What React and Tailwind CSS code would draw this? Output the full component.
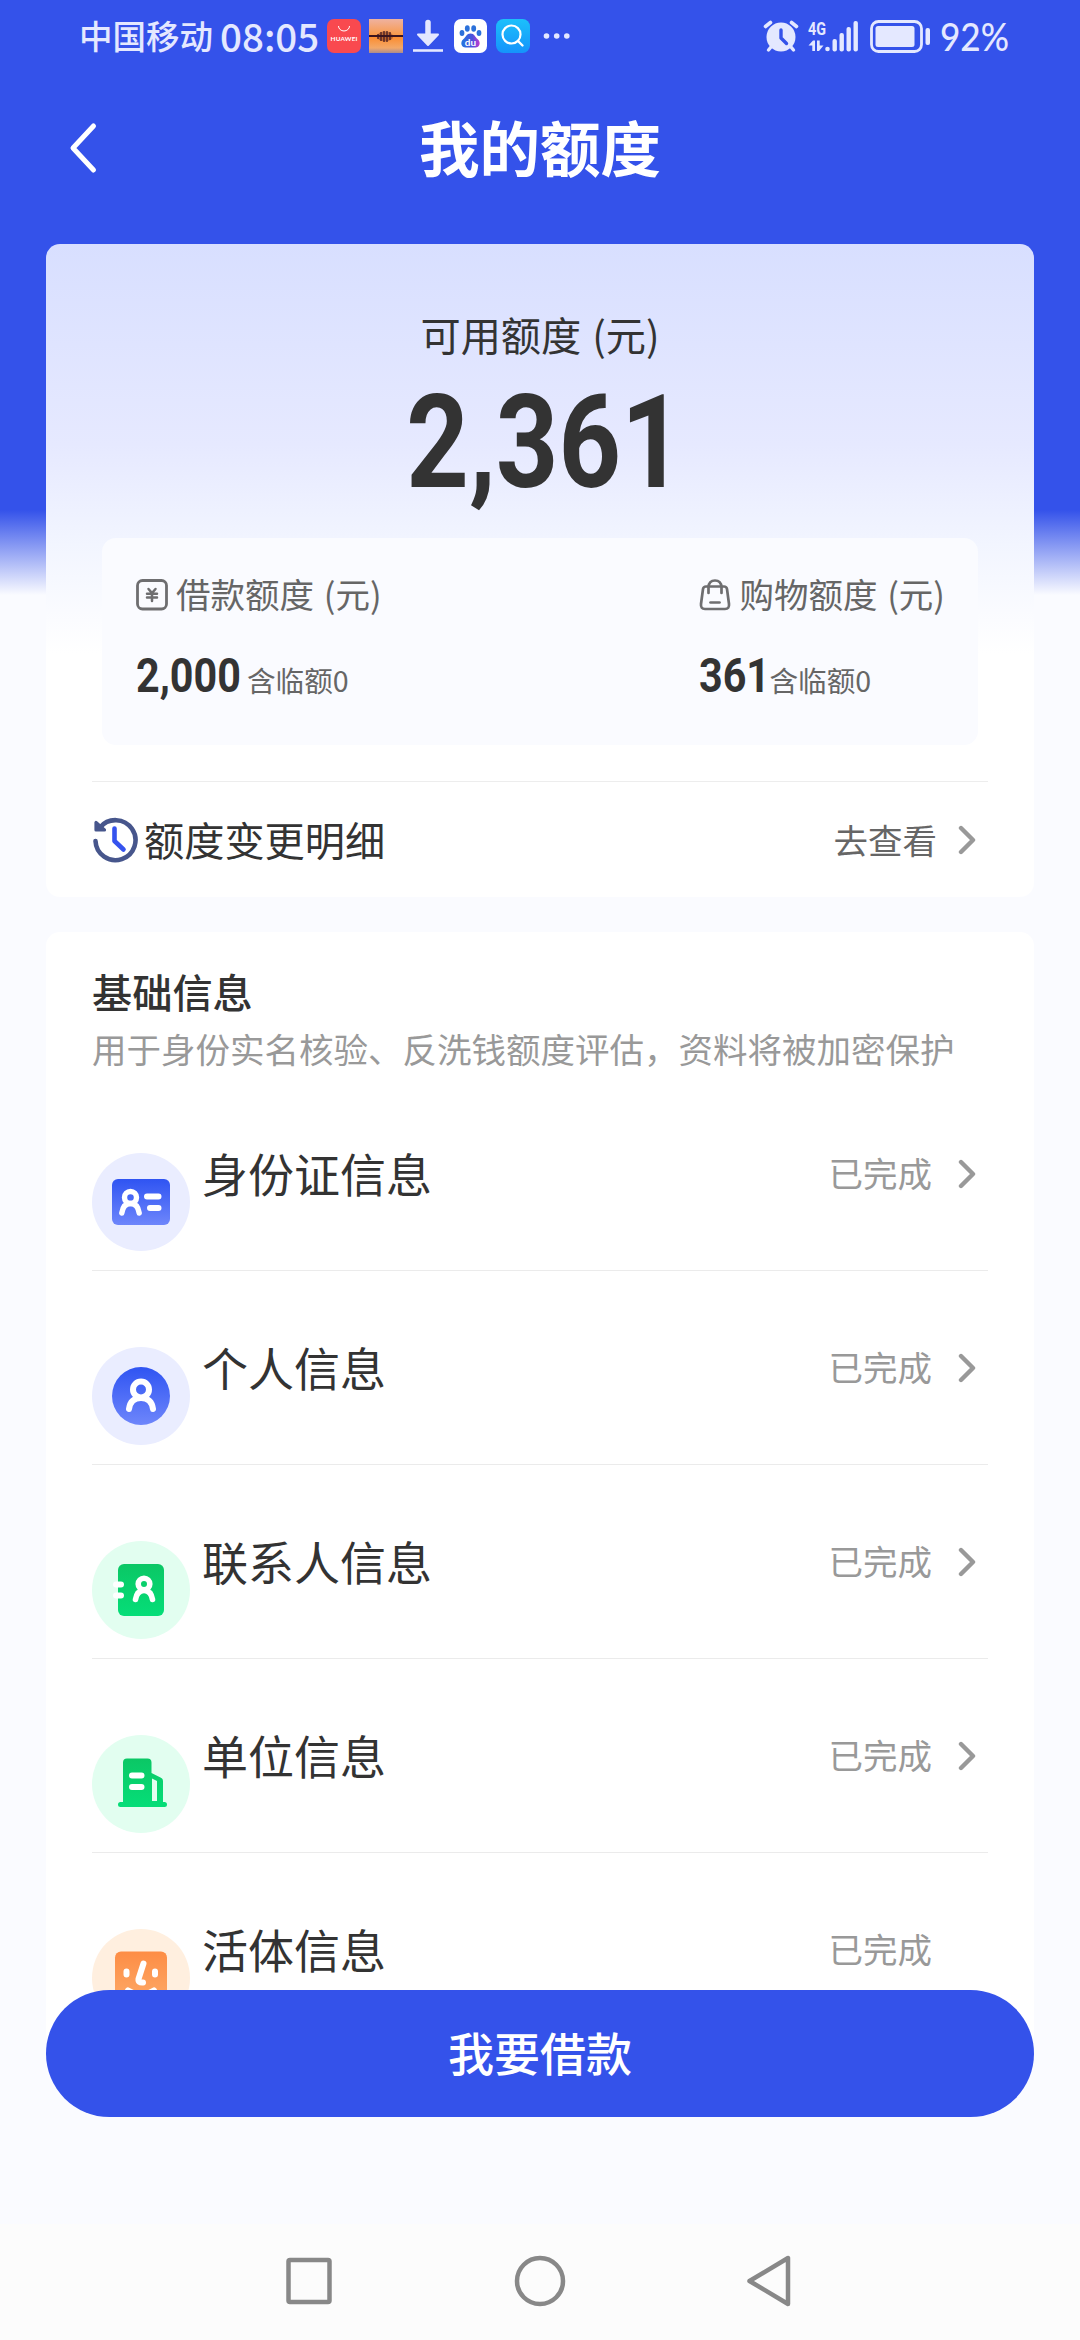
const FONT = "font-['Noto_Sans_CJK_SC',sans-serif]";

const Chevron = ({ className = '' }) => (
    <svg className={`h-[30px] w-[20px] ${className}`} viewBox="0 0 20 30" fill="none">
        <path d="M4 3 L16 15 L4 27" stroke="#999" strokeWidth="4.4" strokeLinecap="round" strokeLinejoin="round" />
    </svg>
);

const StatusBar = () => (
    <div className="flex h-[72px] shrink-0 items-center pl-[79px] pr-[72px] text-[#e4e8ff]">
        <span className="w-[141px] whitespace-nowrap text-[33.5px] font-medium leading-[70px] -mt-[2px]">中国移动</span>
        <span className="w-[107px] whitespace-nowrap text-[38.5px] font-medium leading-[70px] -mt-[2px]">08:05</span>

        {/* Notification icons */}
        <svg className="h-[34px] w-[34px]" viewBox="0 0 34 34">
            <rect width="34" height="34" rx="7" fill="#f9494f" />
            <path d="M11.5 7 a5.5 5 0 0 0 11 0" fill="none" stroke="#fff" strokeWidth="1" />
            <text x="17" y="22" fill="#fff" fontSize="6.4" fontWeight="700" textAnchor="middle" fontFamily="Lato, sans-serif" textLength="27">HUAWEI</text>
        </svg>
        <svg className="ml-[8px] h-[34px] w-[34px]" viewBox="0 0 34 34">
            <defs>
                <linearGradient id="sky" x1="0" y1="0" x2="0" y2="1">
                    <stop offset="0" stopColor="#efb2a0" />
                    <stop offset="0.46" stopColor="#f89a4c" />
                    <stop offset="0.55" stopColor="#fb8e33" />
                    <stop offset="0.85" stopColor="#f3a868" />
                    <stop offset="1" stopColor="#a98c90" />
                </linearGradient>
            </defs>
            <rect width="34" height="34" fill="url(#sky)" />
            <ellipse cx="16" cy="17.5" rx="8" ry="5" fill="#8d3f22" opacity="0.55" />
            <path d="M0 17 H34" stroke="#3a1420" strokeWidth="1.8" />
            <path d="M9 15 V20 M12 13 V22 M15 12 V23 M18 12 V23 M21 13 V21" stroke="#3a1420" strokeWidth="1.2" />
        </svg>
        <svg className="ml-[9px] h-[34px] w-[32px]" viewBox="0 0 32 34">
            <path d="M16 3.5 V15" stroke="currentColor" strokeWidth="5.5" strokeLinecap="round" />
            <path d="M6 15.5 H26 L16 26 Z" fill="currentColor" stroke="currentColor" strokeWidth="2" strokeLinejoin="round" />
            <path d="M1 31.5 H31" stroke="currentColor" strokeWidth="2.6" />
        </svg>
        <svg className="ml-[10px] h-[34px] w-[33px]" viewBox="0 0 33 34">
            <defs>
                <linearGradient id="paw" x1="0" y1="0" x2="1" y2="0">
                    <stop offset="0" stopColor="#2277e0" />
                    <stop offset="0.6" stopColor="#4a50dd" />
                    <stop offset="1" stopColor="#c33bd0" />
                </linearGradient>
            </defs>
            <rect width="33" height="34" rx="7" fill="#fff" />
            <ellipse cx="8" cy="14" rx="2.4" ry="3" fill="#2c71da" />
            <ellipse cx="13.3" cy="9.5" rx="2.4" ry="3.2" fill="#2c71da" />
            <ellipse cx="19.7" cy="9.5" rx="2.4" ry="3.2" fill="#2c71da" />
            <ellipse cx="25" cy="14" rx="2.4" ry="3" fill="#2c71da" />
            <path d="M16.5 14.5 c4 0 4.5 3.5 7 5.5 c4 3.5 2 8.5 -2 8.5 H11.5 c-4 0 -6 -5 -2 -8.5 c2.5 -2 3 -5.5 7 -5.500 Z" fill="url(#paw)" />
            <text x="16.5" y="27" fill="#fff" fontSize="10" fontWeight="700" textAnchor="middle" fontFamily="Lato, sans-serif">du</text>
        </svg>
        <svg className="ml-[9px] h-[34px] w-[34px]" viewBox="0 0 34 34">
            <defs>
                <linearGradient id="find" x1="0" y1="0" x2="0" y2="1">
                    <stop offset="0" stopColor="#1cc0fb" />
                    <stop offset="1" stopColor="#1593fb" />
                </linearGradient>
            </defs>
            <rect width="34" height="34" rx="7.5" fill="url(#find)" />
            <circle cx="15.5" cy="15.5" r="9" fill="none" stroke="#fff" strokeWidth="2.2" />
            <path d="M22 22 L26.5 26.5" stroke="#fff" strokeWidth="2.4" strokeLinecap="round" />
        </svg>
        <svg className="ml-[13px] h-[8px] w-[28px]" viewBox="0 0 28 8" fill="currentColor">
            <circle cx="3.5" cy="4" r="2.8" />
            <circle cx="13.7" cy="4" r="2.8" />
            <circle cx="23.8" cy="4" r="2.8" />
        </svg>

        {/* System icons */}
        <div className="ml-auto flex items-center">
            <svg className="h-[34px] w-[36px]" viewBox="0 0 36 34">
                <circle cx="18" cy="18" r="14.5" fill="currentColor" />
                <path d="M2.5 7.5 L7.5 3.5 M33.5 7.5 L28.5 3.5" stroke="currentColor" strokeWidth="3.6" strokeLinecap="round" />
                <path d="M8 28 L5.5 31 M28 28 L30.5 31" stroke="currentColor" strokeWidth="3.4" strokeLinecap="round" />
                <path d="M18 11 V19 L23.5 24.5" fill="none" stroke="#3452ea" strokeWidth="3.4" strokeLinecap="round" strokeLinejoin="round" />
            </svg>
            <svg className="ml-[9px] h-[34px] w-[52px]" viewBox="0 0 52 34" fill="currentColor">
                <text x="0" y="15.5" fontSize="18.5" fontWeight="700" fontFamily="Roboto, sans-serif" textLength="18" lengthAdjust="spacingAndGlyphs">4G</text>
                <path d="M0.5 26.5 L5 21.5 H7 V32 H4.300 V26.5 Z" />
                <path d="M9 21.5 H11.7 V26.5 H15.5 L11 32 H9 Z" />
                <circle cx="19.5" cy="30" r="2.3" />
                <rect x="24.5" y="20" width="4.4" height="12.5" rx="2" />
                <rect x="31.5" y="14" width="4.4" height="18.5" rx="2" />
                <rect x="38.5" y="8" width="4.4" height="24.5" rx="2" />
                <rect x="45.5" y="2" width="4.4" height="30.500" rx="2" />
            </svg>
            <svg className="ml-[10px] h-[34px] w-[62px]" viewBox="0 0 62 34">
                <rect x="1.5" y="2.5" width="50" height="30" rx="7" fill="none" stroke="currentColor" strokeWidth="2.8" />
                <rect x="5.5" y="7" width="39" height="21" rx="2.5" fill="currentColor" />
                <rect x="55.5" y="9" width="4.5" height="17" rx="2" fill="currentColor" />
            </svg>
            <span className="ml-[8px] w-[68px] origin-left scale-x-[0.9] whitespace-nowrap font-[Lato] text-[39px] font-medium leading-[72px]">92%</span>
        </div>
    </div>
);

const Circle = ({ fill, children }) => (
    <svg className="h-[98px] w-[98px] shrink-0" viewBox="0 0 98 98">
        <defs>
            <linearGradient id="blue" x1="0" y1="0" x2="0" y2="1">
                <stop offset="0" stopColor="#2f54f2" />
                <stop offset="1" stopColor="#6e86fb" />
            </linearGradient>
            <linearGradient id="green" x1="0" y1="0" x2="0" y2="1">
                <stop offset="0" stopColor="#0bc765" />
                <stop offset="1" stopColor="#05de78" />
            </linearGradient>
            <linearGradient id="orange" x1="0" y1="0" x2="0" y2="1">
                <stop offset="0" stopColor="#fd8d45" />
                <stop offset="1" stopColor="#fdab6a" />
            </linearGradient>
        </defs>
        <circle cx="49" cy="49" r="49" fill={fill} />
        {children}
    </svg>
);

const IdCardIcon = () => (
    <Circle fill="#eaedff">
        <rect x="20" y="26" width="58" height="46" rx="6" fill="url(#blue)" />
        <g fill="none" stroke="#fff" strokeLinecap="round">
            <circle cx="38.5" cy="44.5" r="6" strokeWidth="5.4" />
            <path d="M29.8 60 c1 -6.500 4 -9.500 8.700 -9.500 s7.700 3 8.700 9.500" strokeWidth="5.4" />
            <path d="M55 43.5 H66.5 M58 55 H66.5" strokeWidth="6" />
        </g>
    </Circle>
);

const PersonIcon = () => (
    <Circle fill="#eaedff">
        <circle cx="49" cy="49" r="29" fill="url(#blue)" />
        <g fill="none" stroke="#fff" strokeLinecap="round">
            <circle cx="49" cy="42.5" r="8" strokeWidth="6" />
            <path d="M37 62 c1 -7.500 5 -11 12 -11 s11 3.500 12 11" strokeWidth="6" />
        </g>
    </Circle>
);

const ContactIcon = () => (
    <Circle fill="#e2fef0">
        <rect x="26" y="23" width="46" height="52" rx="6" fill="url(#green)" />
        <g fill="none" stroke="#fff" strokeLinecap="round">
            <path d="M24 43.5 H29 M24 54.5 H29" strokeWidth="6" />
            <circle cx="52" cy="43" r="5.800" strokeWidth="5.600" />
            <path d="M43.5 58.5 c1 -6 3.500 -9 8.500 -9 s7.500 3 8.500 9" strokeWidth="5.600" />
        </g>
    </Circle>
);

const CompanyIcon = () => (
    <Circle fill="#e2fef0">
        <path d="M31 67 V27.5 a4 4 0 0 1 4 -4 H55.5 a4 4 0 0 1 4 4 V38 L68.5 42.5 a4 4 0 0 1 2.5 4 V67 H72.5 a2.5 2.5 0 0 1 0 5 H28.5 a2.5 2.5 0 0 1 0 -5 Z" fill="url(#green)" />
        <path d="M40 40.5 H49.5 M40 52 H49.5" stroke="#fff" strokeWidth="6" strokeLinecap="round" />
        <path d="M60 43.500 L65 46 V66 H60 Z" fill="#e2fef0" />
    </Circle>
);

const FaceIcon = () => (
    <Circle fill="#ffefdf">
        <rect x="23" y="22.5" width="52" height="54" rx="6" fill="url(#orange)" />
        <g fill="none" stroke="#fff" strokeLinecap="round" strokeLinejoin="round">
            <path d="M34.5 42.5 V45.5 M63 42.5 V45.5" strokeWidth="6" />
            <path d="M51.5 34.5 L46.5 50 Q46 54 51 53.5" strokeWidth="6" />
            <path d="M36 61.500 Q49 70 62 61.500" strokeWidth="6" />
        </g>
    </Circle>
);

const rows = [
    { title: '身份证信息', icon: <IdCardIcon />, arrow: true },
    { title: '个人信息', icon: <PersonIcon />, arrow: true },
    { title: '联系人信息', icon: <ContactIcon />, arrow: true },
    { title: '单位信息', icon: <CompanyIcon />, arrow: true },
    { title: '活体信息', icon: <FaceIcon />, arrow: false },
];

const YenIcon = () => (
    <svg className="h-[32px] w-[32px]" viewBox="0 0 32 32" fill="none" stroke="#6e6e70" strokeLinecap="round">
        <rect x="1.5" y="1.5" width="29" height="28.5" rx="5" strokeWidth="2.8" />
        <path d="M12.5 10 L16 14 L19.5 10 M16 14 V22 M11 14.800 H21 M11 18.500 H21" strokeWidth="2.5" />
    </svg>
);

const BagIcon = () => (
    <svg className="h-[32px] w-[32px]" viewBox="0 0 32 32" fill="none" stroke="#6e6e70" strokeWidth="2.7" strokeLinecap="round">
        <path d="M7 7.5 H25 Q27.5 7.5 28 10 L30 25 Q30.5 30 26 30 H6 Q1.5 30 2 25 L4 10 Q4.5 7.5 7 7.5 Z" />
        <path d="M9.5 14 V8 Q10 1.5 16 1.5 Q22 1.5 22.5 8 V14" />
        <path d="M11.5 23.5 H20.5" />
    </svg>
);

const QuotaItem = ({ icon, label, amount, amountClass }) => (
    <div>
        <div className="flex h-[50px] items-center gap-[8px]">
            {icon}
            <span className="-mt-[4px] whitespace-nowrap text-[34.5px] leading-[46px] text-[#666] [word-spacing:2px]">{label}</span>
        </div>
        <div className="mt-[26px] flex h-[60px] items-baseline">
            <span className={`origin-left scale-x-[0.86] font-[Roboto] text-[48px] font-bold leading-[60px] text-[#333] ${amountClass}`}>{amount}</span>
            <span className="whitespace-nowrap text-[28.6px] leading-[60px] text-[#666]">含临额0</span>
        </div>
    </div>
);

export default function App() {
    return (
        <div className={`relative flex h-[2340px] w-[1080px] flex-col overflow-hidden bg-[#fafbff] bg-[linear-gradient(to_bottom,#3452ea_0px,#3452ea_510px,#fafbff_595px)] ${FONT}`}>
            <StatusBar />

            {/* Title bar */}
            <header className="grid h-[172px] shrink-0 grid-cols-[1fr_auto_1fr] items-start pt-[30px]">
                <svg className="ml-[65px] mt-[20px] h-[52px] w-[36px]" viewBox="0 0 36 52" fill="none">
                    <path d="M28.5 4 L8 26 L28.5 48" stroke="#fff" strokeWidth="5" strokeLinecap="round" strokeLinejoin="round" />
                </svg>
                <h1 className="text-[60.5px] font-bold leading-[88px] text-white">我的额度</h1>
            </header>

            <main className="min-h-0 flex-1 overflow-hidden px-[46px]">
                {/* Quota card */}
                <section className="h-[653px] rounded-[14px] bg-[linear-gradient(to_bottom,#d8dfff_0px,#e6e9ff_200px,#f2f5ff_300px,#ffffff_410px)] pt-[60px]">
                    <p className="text-center text-[40.2px] leading-[60px] text-[#333] [word-spacing:2px]">可用额度 (元)</p>
                    <p className="mt-[11px] h-[136px] origin-center scale-x-[0.84] pl-[12px] text-center font-[Roboto] text-[130px] font-bold leading-[136px] text-[#333]">2,361</p>
                    <div className="mx-[56px] mt-[27px] flex h-[207px] justify-between rounded-[14px] bg-[#fafbff] pl-[34px] pr-[33px] pt-[32px]">
                        <QuotaItem icon={<YenIcon />} label="借款额度 (元)" amount="2,000" amountClass="w-[111px]" />
                        <QuotaItem icon={<BagIcon />} label="购物额度 (元)" amount="361" amountClass="w-[70px]" />
                    </div>
                    <div className="mx-[46px] mt-[36px] flex h-[117px] items-center border-t border-[#ededed]">
                        <svg className="h-[46px] w-[46px]" viewBox="0 0 46 46" fill="none" strokeLinecap="round" strokeLinejoin="round">
                            <path d="M3.5 24 A20 20 0 1 0 8 10.5" stroke="#47568c" strokeWidth="4.600" />
                            <path d="M4 5.5 V13 H12.500 Z" fill="#47568c" stroke="#47568c" strokeWidth="3.200" />
                            <path d="M22.5 11.500 V24 L31.500 32.500" stroke="#3553ee" strokeWidth="4.600" />
                        </svg>
                        <span className="-mt-[2px] ml-[6px] text-[40.2px] leading-[60px] text-[#333]">额度变更明细</span>
                        <span className="-mt-[2px] ml-auto mr-[20px] text-[34.5px] leading-[50px] text-[#666]">去查看</span>
                        <Chevron className="mr-[11px]" />
                    </div>
                </section>

                {/* Profile list */}
                <section className="mt-[35px] rounded-[14px] bg-white px-[46px] pt-[29px]">
                    <h2 className="text-[40.2px] font-medium leading-[60px] text-[#333]">基础信息</h2>
                    <p className="whitespace-nowrap text-[34.5px] leading-[54px] text-[#999]">用于身份实名核验、反洗钱额度评估，资料将被加密保护</p>
                    <ul className="mt-[2px]">
                        {rows.map((row) => (
                            <li key={row.title} className="flex h-[194px] items-start border-b border-[#ebebeb] pt-[76px]">
                                {row.icon}
                                <span className="ml-[12px] -mt-[13px] text-[46px] leading-[64px] text-[#333]">{row.title}</span>
                                <span className="ml-auto mr-[25px] -mt-[6px] text-[34.5px] leading-[50px] text-[#999]">已完成</span>
                                <Chevron className={row.arrow ? 'mr-[11px] mt-[6px]' : 'invisible mr-[11px]'} />
                            </li>
                        ))}
                    </ul>
                </section>
            </main>

            {/* Floating action */}
            <button className="absolute left-[46px] top-[1990px] h-[127px] w-[988px] rounded-full bg-[#3452ea] pb-[4px] text-[46px] font-medium text-white">
                我要借款
            </button>

            {/* System navigation */}
            <nav className="flex h-[116px] shrink-0 items-center justify-center bg-[#fcfcfc]">
                <svg className="h-[56px] w-[520px]" viewBox="0 0 520 56" fill="none" stroke="#888" strokeWidth="4.5" strokeLinejoin="round">
                    <rect x="8.5" y="6" width="41" height="42" rx="1.5" />
                    <circle cx="260" cy="27" r="23" />
                    <path d="M508 4 V50 L469.5 27 Z" />
                </svg>
            </nav>
        </div>
    );
}
